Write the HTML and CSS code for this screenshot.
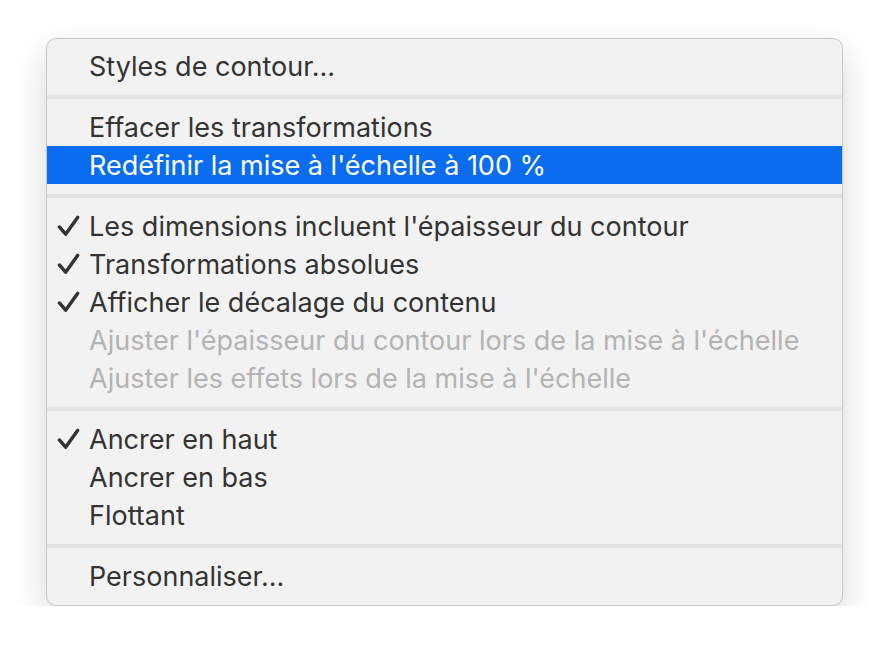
FILE: index.html
```html
<!DOCTYPE html>
<html lang="fr">
<head>
<meta charset="utf-8">
<link rel="stylesheet" href="styles.css">
</head>
<body>
<div class="menu">
  <div class="item"><span class="check"></span><span class="label">Styles de contour...</span></div>
  <div class="sep"></div>
  <div class="item"><span class="check"></span><span class="label">Effacer les transformations</span></div>
  <div class="item active"><span class="check"></span><span class="label">Redéfinir la mise à l'échelle à 100 %</span></div>
  <div class="sep"></div>
  <div class="item"><span class="check"><svg class="tick" viewBox="0 0 24 24"><path d="M2.5 12.5 L9 20 L21.5 2.5"/></svg></span><span class="label">Les dimensions incluent l'épaisseur du contour</span></div>
  <div class="item"><span class="check"><svg class="tick" viewBox="0 0 24 24"><path d="M2.5 12.5 L9 20 L21.5 2.5"/></svg></span><span class="label">Transformations absolues</span></div>
  <div class="item"><span class="check"><svg class="tick" viewBox="0 0 24 24"><path d="M2.5 12.5 L9 20 L21.5 2.5"/></svg></span><span class="label">Afficher le décalage du contenu</span></div>
  <div class="item disabled"><span class="check"></span><span class="label">Ajuster l'épaisseur du contour lors de la mise à l'échelle</span></div>
  <div class="item disabled"><span class="check"></span><span class="label">Ajuster les effets lors de la mise à l'échelle</span></div>
  <div class="sep"></div>
  <div class="item"><span class="check"><svg class="tick" viewBox="0 0 24 24"><path d="M2.5 12.5 L9 20 L21.5 2.5"/></svg></span><span class="label">Ancrer en haut</span></div>
  <div class="item"><span class="check"></span><span class="label">Ancrer en bas</span></div>
  <div class="item"><span class="check"></span><span class="label">Flottant</span></div>
  <div class="sep"></div>
  <div class="item"><span class="check"></span><span class="label">Personnaliser...</span></div>
</div>
</body>
</html>
```

FILE: styles.css
```css
html, body {
  margin: 0;
  padding: 0;
  background: #ffffff;
}
body {
  padding: 38px 0 0 46px;
  font-family: Inter, "Liberation Sans", sans-serif;
}
.menu {
  width: 795px;
  border: 1px solid #c6c6c6;
  border-radius: 10px;
  background: #f2f2f2;
  padding: 8px 0 10px;
  box-shadow: 0 14px 34px rgba(0, 0, 0, 0.16);
  overflow: hidden;
}
.item {
  display: flex;
  align-items: center;
  height: 38px;
  font-size: 27px;
  color: #333333;
  white-space: nowrap;
}
.check {
  width: 42px;
  flex: none;
  display: flex;
  align-items: center;
  padding-left: 10px;
  box-sizing: border-box;
}
.tick {
  width: 23px;
  height: 23px;
  fill: none;
  stroke: #333333;
  stroke-width: 3.6;
  stroke-linecap: round;
  stroke-linejoin: round;
}
.item.active {
  background: #0a6df0;
  color: #ffffff;
}
.item.disabled {
  color: #b3b3b3;
}
.sep {
  height: 4px;
  background: #e3e3e3;
  margin: 10px 0 9px;
}
```
